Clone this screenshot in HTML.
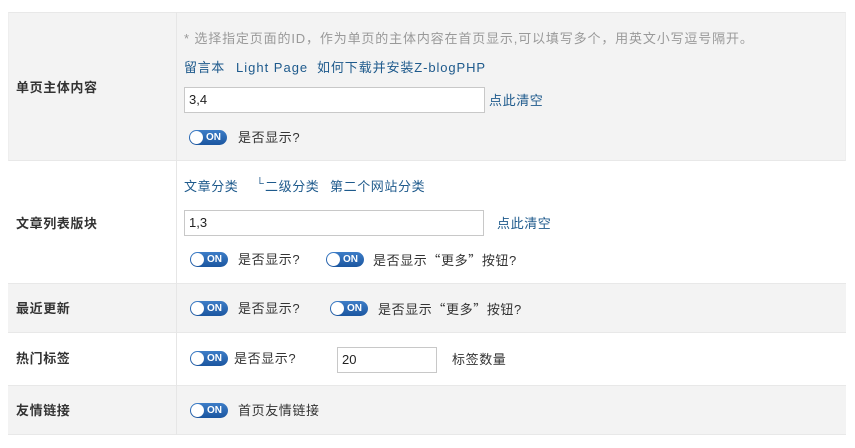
<!DOCTYPE html>
<html><head><meta charset="utf-8"><style>
*{margin:0;padding:0;box-sizing:border-box}
body{width:855px;height:448px;background:#fff;position:relative;overflow:hidden;font-family:"Liberation Sans","Noto Sans CJK SC",sans-serif;font-size:13px;color:#333}
.a{position:absolute;white-space:nowrap;line-height:16px;letter-spacing:0.6px}
.row{position:absolute;left:8px;width:838px;border-bottom:1px solid #e8e8e8}
.g{background:#f3f3f3}
.vl{position:absolute;left:176px;top:12px;width:1px;height:423px;background:#e6e6e6}
.lab{font-weight:bold;color:#333}
.lk{color:#1e5a8c}
.gr{color:#999}
.q{font-family:"Noto Sans CJK SC",sans-serif}
.inp{position:absolute;border:1px solid #c8c8c8;background:#fff;height:26px;padding-left:4px;line-height:24px;font-size:13px;color:#222}
.tg{position:absolute;width:38px;height:15px;border-radius:8px;background:linear-gradient(#3d7dc7,#1b56a0);}
.tg::before{content:"";position:absolute;left:1px;top:1px;width:13px;height:13px;border-radius:50%;background:#fff}
.tg::after{content:"ON";position:absolute;left:17px;top:2px;font-size:10px;font-weight:bold;color:#fff;line-height:12px}
</style></head><body>
<div class="row g" style="top:12px;height:149px;border-top:1px solid #e8e8e8;border-left:1px solid #eee;border-right:1px solid #eee"></div>
<div class="row" style="top:161px;height:123px"></div>
<div class="row g" style="top:284px;height:49px"></div>
<div class="row" style="top:333px;height:53px"></div>
<div class="row g" style="top:386px;height:49px"></div>
<div class="vl"></div>

<div class="a lab" style="left:16px;top:80px">单页主体内容</div>
<div class="a gr" style="left:184px;top:31px;letter-spacing:0.85px">* 选择指定页面的ID，作为单页的主体内容在首页显示,可以填写多个，用英文小写逗号隔开。</div>
<div class="a lk" style="left:184px;top:60px">留言本</div>
<div class="a lk" style="left:236px;top:60px;letter-spacing:1px">Light Page</div>
<div class="a lk" style="left:317px;top:60px;letter-spacing:0.9px">如何下载并安装Z-blogPHP</div>
<div class="inp" style="left:184px;top:87px;width:301px">3,4</div>
<div class="a lk" style="left:489px;top:93px">点此清空</div>
<div class="tg" style="left:189px;top:130px"></div>
<div class="a" style="left:238px;top:130px">是否显示?</div>

<div class="a lab" style="left:16px;top:216px">文章列表版块</div>
<div class="a lk" style="left:184px;top:179px">文章分类</div>
<div class="a lk" style="left:256px;top:176px;font-size:11px">└</div>
<div class="a lk" style="left:265px;top:179px">二级分类</div>
<div class="a lk" style="left:330px;top:179px">第二个网站分类</div>
<div class="inp" style="left:184px;top:210px;width:300px">1,3</div>
<div class="a lk" style="left:497px;top:216px">点此清空</div>
<div class="tg" style="left:190px;top:252px"></div>
<div class="a" style="left:238px;top:252px">是否显示?</div>
<div class="tg" style="left:326px;top:252px"></div>
<div class="a" style="left:373px;top:252px">是否显示<span class="q">“更多”</span>按钮?</div>

<div class="a lab" style="left:16px;top:301px">最近更新</div>
<div class="tg" style="left:190px;top:301px"></div>
<div class="a" style="left:238px;top:301px">是否显示?</div>
<div class="tg" style="left:330px;top:301px"></div>
<div class="a" style="left:378px;top:301px">是否显示<span class="q">“更多”</span>按钮?</div>

<div class="a lab" style="left:16px;top:351px">热门标签</div>
<div class="tg" style="left:190px;top:351px"></div>
<div class="a" style="left:234px;top:351px">是否显示?</div>
<div class="inp" style="left:337px;top:347px;width:100px">20</div>
<div class="a" style="left:452px;top:352px">标签数量</div>

<div class="a lab" style="left:16px;top:403px">友情链接</div>
<div class="tg" style="left:190px;top:403px"></div>
<div class="a" style="left:238px;top:403px">首页友情链接</div>
</body></html>
